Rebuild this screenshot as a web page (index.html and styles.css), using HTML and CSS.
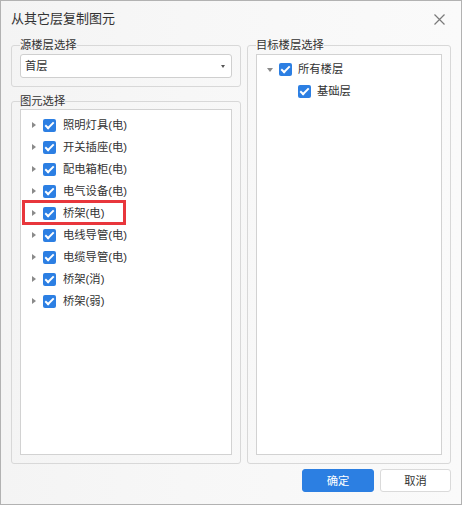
FILE: index.html
```html
<!DOCTYPE html>
<html lang="zh">
<head>
<meta charset="utf-8">
<title>从其它层复制图元</title>
<link rel="stylesheet" href="styles.css">
</head>
<body>
<div class="dialog">
  <div class="titlebar">
    <span class="title">从其它层复制图元</span>
    <svg class="close" width="11" height="11" viewBox="0 0 11 11"><path d="M0.5 0.5L10.5 10.5M10.5 0.5L0.5 10.5" stroke="#7a7a7a" stroke-width="1.2" fill="none"/></svg>
  </div>
  <div class="main">
    <div class="col-left">
      <fieldset class="group group-src">
        <legend>源楼层选择</legend>
        <div class="select"><span>首层</span><span class="caret"></span></div>
      </fieldset>
      <fieldset class="group group-fill">
        <legend>图元选择</legend>
        <div class="tree tree-left">
          <div class="row"><span class="arr arr-right"></span><span class="cb"></span><span class="lbl">照明灯具(电)</span></div>
          <div class="row"><span class="arr arr-right"></span><span class="cb"></span><span class="lbl">开关插座(电)</span></div>
          <div class="row"><span class="arr arr-right"></span><span class="cb"></span><span class="lbl">配电箱柜(电)</span></div>
          <div class="row"><span class="arr arr-right"></span><span class="cb"></span><span class="lbl">电气设备(电)</span></div>
          <div class="row hl"><span class="arr arr-right"></span><span class="cb"></span><span class="lbl">桥架(电)</span></div>
          <div class="row"><span class="arr arr-right"></span><span class="cb"></span><span class="lbl">电线导管(电)</span></div>
          <div class="row"><span class="arr arr-right"></span><span class="cb"></span><span class="lbl">电缆导管(电)</span></div>
          <div class="row"><span class="arr arr-right"></span><span class="cb"></span><span class="lbl">桥架(消)</span></div>
          <div class="row"><span class="arr arr-right"></span><span class="cb"></span><span class="lbl">桥架(弱)</span></div>
        </div>
      </fieldset>
    </div>
    <fieldset class="group group-fill group-right">
      <legend>目标楼层选择</legend>
      <div class="tree tree-right">
        <div class="row"><span class="arr arr-down"></span><span class="cb"></span><span class="lbl">所有楼层</span></div>
        <div class="row child"><span class="arr"></span><span class="cb"></span><span class="lbl">基础层</span></div>
      </div>
    </fieldset>
  </div>
  <div class="footer">
    <button class="btn btn-primary">确定</button>
    <button class="btn btn-default">取消</button>
  </div>
</div>
</body>
</html>
```

FILE: styles.css
```css
html, body {
  margin: 0;
  padding: 0;
}
body {
  font-family: "Liberation Sans", "Noto Sans CJK SC", sans-serif;
  font-size: 11.3px;
  color: #333;
  background: #fff;
}
.dialog {
  width: 462px;
  height: 505px;
  box-sizing: border-box;
  border: 1px solid #b2b2b2;
  background: linear-gradient(90deg, #f4f4f4 0%, #f7f7f7 40%, #fafafa 100%);
  display: flex;
  flex-direction: column;
}
.titlebar {
  height: 37px;
  box-sizing: border-box;
  padding: 10px 10px 0 10px;
  display: flex;
  justify-content: space-between;
  align-items: flex-start;
}
.title {
  font-size: 13px;
  line-height: 16px;
  color: #333;
}
.close {
  margin-top: 3px;
  margin-right: 6px;
}
.main {
  display: grid;
  grid-template-columns: 230px 204px;
  column-gap: 6px;
  padding: 0 10px;
  height: 426px;
}
.col-left {
  display: flex;
  flex-direction: column;
  gap: 7px;
  min-height: 0;
}
.group {
  margin: 0;
  border: 1px solid #d8d8d8;
  border-radius: 3px;
  padding: 0 8px 8px 8px;
  min-width: 0;
  display: flex;
  flex-direction: column;
}
.group legend {
  padding: 0;
  line-height: 14px;
  font-size: 11.3px;
  color: #333;
}
.group-src {
  padding-top: 2px;
}
.group-fill {
  flex: 1;
  min-height: 0;
}
.group-right {
  padding-top: 2px;
}
.col-left .group-fill {
  padding-top: 1px;
}
.select {
  height: 24px;
  box-sizing: border-box;
  border: 1px solid #cfcfcf;
  border-radius: 3px;
  background: #fff;
  display: flex;
  align-items: center;
  justify-content: space-between;
  padding: 0 6px 0 4px;
  line-height: 14px;
}
.caret {
  width: 0;
  height: 0;
  border-left: 2px solid transparent;
  border-right: 2px solid transparent;
  border-top: 3px solid #555;
}
.tree {
  flex: 1;
  background: #fff;
  border: 1px solid #d2d2d2;
  padding-top: 3px;
  box-sizing: border-box;
}
.tree-left {
  padding-top: 4px;
}
.row {
  height: 22px;
  display: flex;
  align-items: center;
  padding-left: 10px;
  line-height: 14px;
}
.row.child {
  padding-left: 29px;
}
.row.hl {
  position: relative;
}
.row.hl::after {
  content: "";
  position: absolute;
  left: 1px;
  top: -2px;
  width: 104px;
  height: 25px;
  box-sizing: border-box;
  border: 3px solid #e8363c;
}
.arr {
  width: 12px;
  height: 22px;
  position: relative;
  flex: none;
}
.arr-right::before {
  content: "";
  position: absolute;
  left: 1px;
  top: 8px;
  width: 0;
  height: 0;
  border-top: 3px solid transparent;
  border-bottom: 3px solid transparent;
  border-left: 4px solid #8a8a8a;
}
.arr-down::before {
  content: "";
  position: absolute;
  left: 0;
  top: 10px;
  width: 0;
  height: 0;
  border-left: 3px solid transparent;
  border-right: 3px solid transparent;
  border-top: 4px solid #8a8a8a;
}
.cb {
  width: 13px;
  height: 13px;
  border-radius: 2px;
  background: #2c7fe3;
  flex: none;
  position: relative;
  margin-right: 7px;
}
.tree-right .cb {
  margin-right: 6px;
}
.cb::after {
  content: "";
  position: absolute;
  left: 4px;
  top: 1.5px;
  width: 3px;
  height: 7px;
  border-right: 2px solid #fff;
  border-bottom: 2px solid #fff;
  transform: rotate(45deg);
}
.lbl {
  white-space: nowrap;
}
.footer {
  display: flex;
  justify-content: flex-end;
  gap: 6px;
  padding: 5px 10px 0 10px;
}
.btn {
  width: 72px;
  height: 23px;
  box-sizing: border-box;
  border-radius: 3px;
  font-family: "Liberation Sans", "Noto Sans CJK SC", sans-serif;
  font-size: 11.3px;
  line-height: 14px;
  padding: 0;
  cursor: pointer;
}
.btn-primary {
  background: #2c7fe2;
  border: 1px solid #2c7fe2;
  color: #fff;
}
.btn-default {
  width: 71px;
  background: #fff;
  border: 1px solid #dadada;
  color: #333;
}
```
